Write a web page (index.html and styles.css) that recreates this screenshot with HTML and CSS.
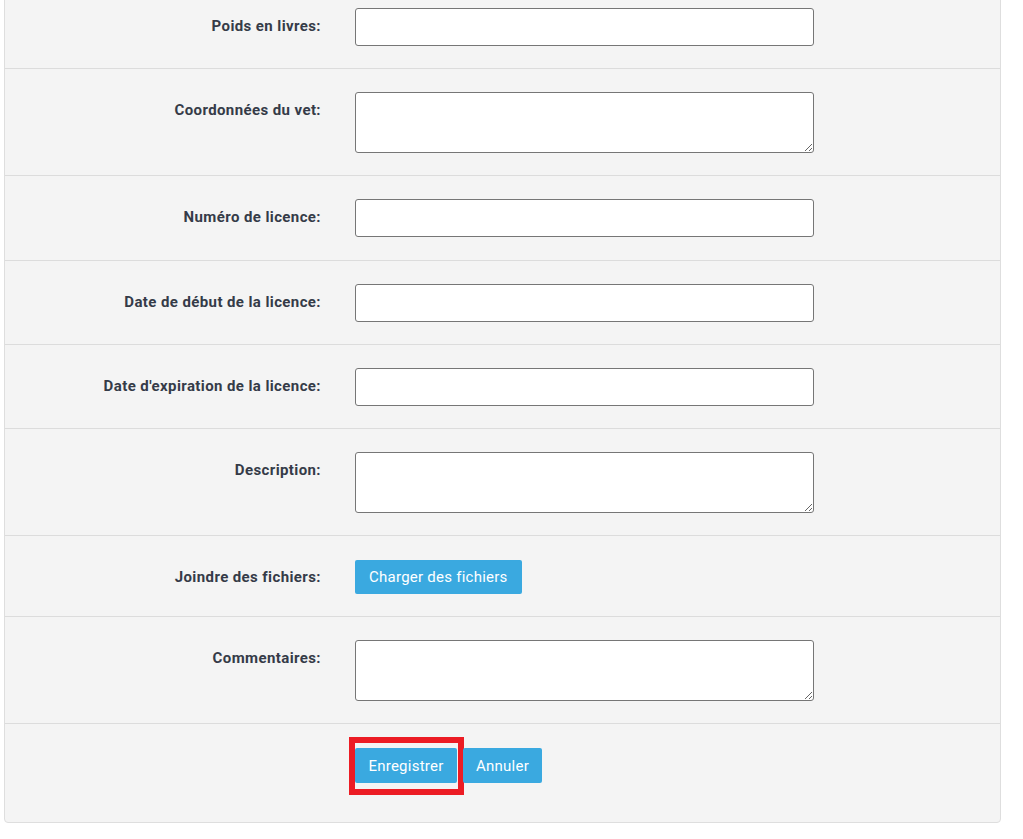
FILE: index.html
```html
<!DOCTYPE html>
<html lang="fr">
<head>
    <meta charset="UTF-8">
    <meta name="viewport" content="width=device-width, initial-scale=1.0">
    <title>Fiche animal</title>
    <link rel="stylesheet" href="styles.css">
</head>
<body>
    <div class="panel">
        <div class="row">
            <label for="poids">Poids en livres:</label>
            <input type="text" id="poids">
        </div>

        <div class="row">
            <label for="vet">Coordonnées du vet:</label>
            <textarea id="vet"></textarea>
        </div>

        <div class="row row-licence">
            <label for="licence">Numéro de licence:</label>
            <input type="text" id="licence">
        </div>

        <div class="row">
            <label for="debut">Date de début de la licence:</label>
            <input type="text" id="debut">
        </div>

        <div class="row">
            <label for="expiration">Date d'expiration de la licence:</label>
            <input type="text" id="expiration">
        </div>

        <div class="row">
            <label for="description">Description:</label>
            <textarea id="description"></textarea>
        </div>

        <div class="row row-btn">
            <label>Joindre des fichiers:</label>
            <div>
                <button class="btn">Charger des fichiers</button>
            </div>
        </div>

        <div class="row">
            <label for="commentaires">Commentaires:</label>
            <textarea id="commentaires"></textarea>
        </div>

        <div class="row row-actions">
            <span></span>
            <div class="actions">
                <div class="highlight">
                    <button class="btn btn-save">Enregistrer</button>
                </div>
                <button class="btn btn-cancel">Annuler</button>
            </div>
        </div>
    </div>
</body>
</html>
```

FILE: styles.css
```css
/* General */
body {
    font-family: 'Roboto', 'Liberation Sans', sans-serif;
    background-color: #fff;
    color: #353b48;
    margin: 0;
    padding: 0;
    overflow: hidden;
}

.panel {
    width: 997px;
    box-sizing: border-box;
    margin: -16px 0 0 4px;
    background-color: #f4f4f4;
    border: 1px solid #dedede;
    border-radius: 4px;
}

.row {
    display: grid;
    grid-template-columns: 316px 459px;
    column-gap: 34px;
    align-items: start;
    padding: 23px 0 22px;
    border-bottom: 1px solid #dcdcdc;
}

.row:last-child {
    border-bottom: none;
}

.row-licence {
    padding-bottom: 23px;
}

label {
    font-size: 15px;
    font-weight: bold;
    letter-spacing: 0.4px;
    color: #353b48;
    text-align: right;
    line-height: 36px;
}

input, textarea {
    display: block;
    width: 100%;
    box-sizing: border-box;
    border: 1px solid #767676;
    border-radius: 3px;
    background-color: #fff;
    font-family: inherit;
    font-size: 14px;
    margin: 0;
}

input {
    height: 38px;
    padding: 6px 10px;
}

textarea {
    height: 61px;
    padding: 6px 10px;
}

.btn {
    display: inline-block;
    background-color: #3aa9e0;
    color: #fff;
    border: none;
    border-radius: 2px;
    font-family: inherit;
    font-size: 15px;
    font-weight: normal;
    letter-spacing: 0.25px;
    height: 34px;
    padding: 0 14px;
    cursor: pointer;
}

.row-btn {
    padding-top: 24px;
}

.row-btn label {
    line-height: 34px;
}

.row-actions {
    padding: 24px 0 39px;
}

.actions {
    display: flex;
    gap: 6px;
}

.actions .btn {
    height: 35px;
    padding: 0;
}

.btn-save {
    width: 102px;
}

.btn-cancel {
    width: 79px;
    position: relative;
}

/* marque rouge autour du bouton enregistrer */
.highlight {
    position: relative;
}

.highlight::after {
    content: "";
    position: absolute;
    left: -6px;
    top: -11px;
    width: 115px;
    height: 58px;
    box-sizing: border-box;
    border: 6px solid #ec1c24;
    pointer-events: none;
}
```
